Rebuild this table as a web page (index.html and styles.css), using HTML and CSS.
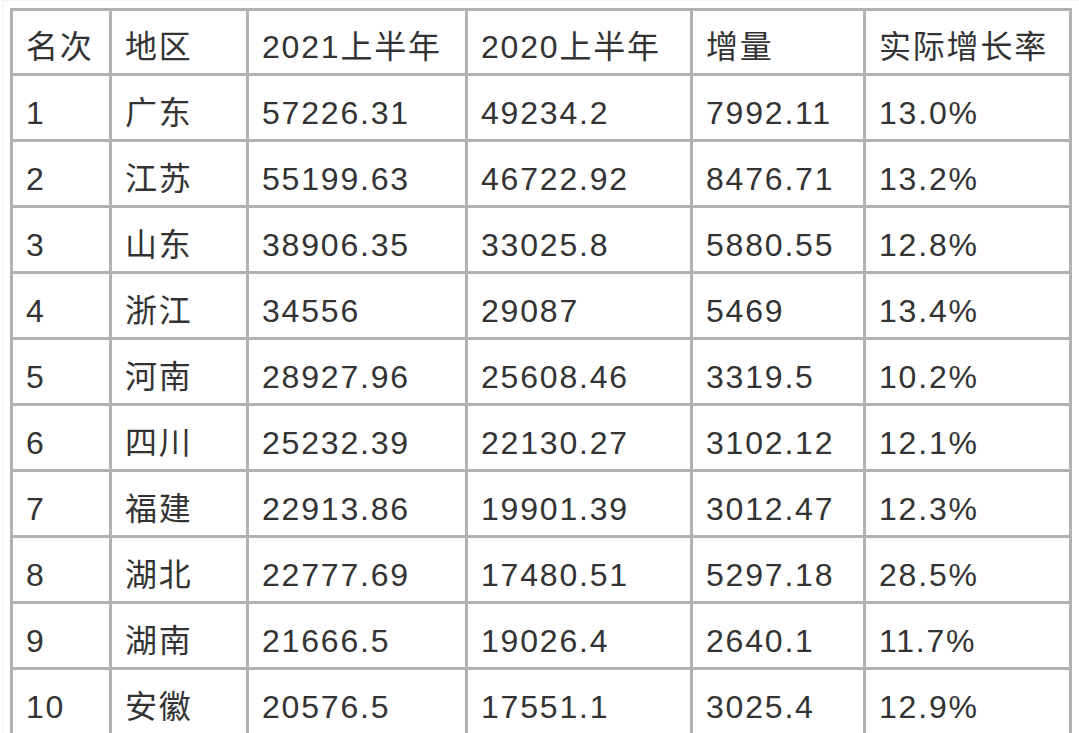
FILE: index.html
```html
<!DOCTYPE html>
<html lang="zh-CN">
<head>
<meta charset="utf-8">
<title>2021上半年 GDP</title>
<link rel="stylesheet" href="styles.css">
</head>
<body>
<div class="page">
<table class="gdp">
  <colgroup>
    <col class="c1"><col class="c2"><col class="c3"><col class="c4"><col class="c5"><col class="c6">
  </colgroup>
  <thead>
    <tr><th>名次</th><th>地区</th><th>2021上半年</th><th>2020上半年</th><th>增量</th><th>实际增长率</th></tr>
  </thead>
  <tbody>
    <tr><td>1</td><td>广东</td><td>57226.31</td><td>49234.2</td><td>7992.11</td><td>13.0%</td></tr>
    <tr><td>2</td><td>江苏</td><td>55199.63</td><td>46722.92</td><td>8476.71</td><td>13.2%</td></tr>
    <tr><td>3</td><td>山东</td><td>38906.35</td><td>33025.8</td><td>5880.55</td><td>12.8%</td></tr>
    <tr><td>4</td><td>浙江</td><td>34556</td><td>29087</td><td>5469</td><td>13.4%</td></tr>
    <tr><td>5</td><td>河南</td><td>28927.96</td><td>25608.46</td><td>3319.5</td><td>10.2%</td></tr>
    <tr><td>6</td><td>四川</td><td>25232.39</td><td>22130.27</td><td>3102.12</td><td>12.1%</td></tr>
    <tr><td>7</td><td>福建</td><td>22913.86</td><td>19901.39</td><td>3012.47</td><td>12.3%</td></tr>
    <tr><td>8</td><td>湖北</td><td>22777.69</td><td>17480.51</td><td>5297.18</td><td>28.5%</td></tr>
    <tr><td>9</td><td>湖南</td><td>21666.5</td><td>19026.4</td><td>2640.1</td><td>11.7%</td></tr>
    <tr><td>10</td><td>安徽</td><td>20576.5</td><td>17551.1</td><td>3025.4</td><td>12.9%</td></tr>
  </tbody>
</table>
</div>
</body>
</html>
```

FILE: styles.css
```css
html, body {
  margin: 0;
  padding: 0;
  background: #ffffff;
}
body {
  font-family: "Liberation Sans", "Noto Sans CJK SC", sans-serif;
  color: #333333;
  overflow: hidden;
}
.page {
  padding: 7px 0 0 7px;
  border-top: 1px solid #f2f2f2;
  margin-left: 2px;
  border-left: 1px solid #f2f2f2;
  height: 760px;
  box-sizing: border-box;
}
.gdp {
  border-collapse: collapse;
  table-layout: fixed;
  width: 1059px;
}
.c1 { width: 99px; }
.c2 { width: 137px; }
.c3 { width: 219px; }
.c4 { width: 225px; }
.c5 { width: 173px; }
.c6 { width: 206px; }
.gdp th,
.gdp td {
  border: 3px solid #b2b2b2;
  height: 66px;
  padding: 10px 0 0 13px;
  box-sizing: border-box;
  text-align: left;
  vertical-align: middle;
  font-weight: normal;
  font-size: 32px;
  letter-spacing: 1.8px;
  line-height: 40px;
  white-space: nowrap;
  color: #333333;
}
.gdp th {
  height: 65px;
}
```
